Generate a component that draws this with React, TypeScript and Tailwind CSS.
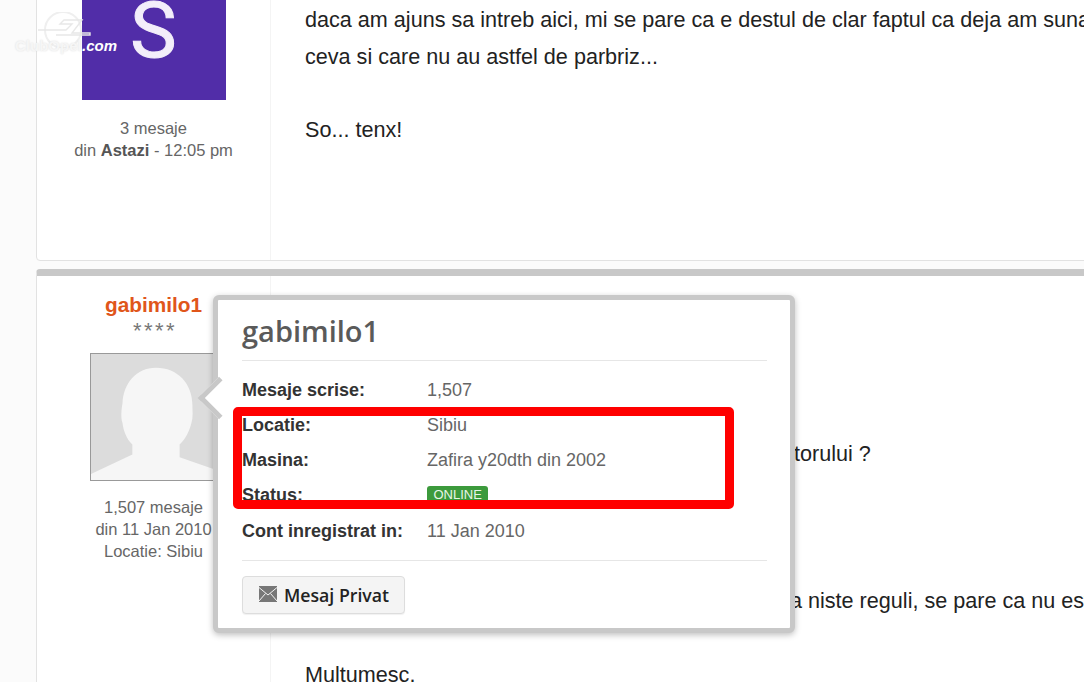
const rows = [
  { label: "Mesaje scrise:", value: "1,507" },
  { label: "Locatie:", value: "Sibiu" },
  { label: "Masina:", value: "Zafira y20dth din 2002" },
];

function Watermark() {
  return (
    <div className="absolute left-[14px] top-[12px] z-30 h-[46px] w-[106px] font-['Liberation_Sans',sans-serif] text-white">
      <svg width="106" height="36" viewBox="0 0 106 36" fill="none" className="absolute left-0 top-0">
        <circle cx="49" cy="18" r="18" stroke="#efefef" strokeWidth="2" />
        <path d="M24 18 H52 L58 12 H46 L50 8 H68 L58 21 H76 V23 H42" stroke="#e8e8e8" strokeWidth="1.4" />
      </svg>
      <span className="absolute left-px top-[25px] text-[15px] font-bold leading-[18px] text-[#f6f6f6] [text-shadow:0_0_2px_#ddd]">
        ClubOpel
      </span>
      <span className="absolute left-[68px] top-[25px] text-[15px] font-bold italic leading-[18px]">.com</span>
    </div>
  );
}

function Silhouette() {
  return (
    <svg viewBox="0 0 128 128" className="h-full w-full">
      <rect width="128" height="128" fill="#dcdcdc" />
      <path
        d="M66 14 C88 14 103 30 103 52 C103 58 104 64 102 70 C99 82 94 88 90 92 L90 105 L128 118 V128 H0 V122 L42 102 V92 C36 86 33 78 32 70 C30 64 31 56 32 50 C33 30 46 14 66 14 Z"
        fill="#f6f6f6"
      />
    </svg>
  );
}

function UserPopup() {
  return (
    <div className="absolute left-[176px] top-[19px] z-10 h-[338px] w-[582px] rounded-[6px] border-[5px] border-[#c8c8c8] bg-white pl-[24px] pr-[23px] shadow-[0_2px_6px_rgba(0,0,0,0.25)]">
      <div className="absolute left-[-14px] top-[83px] h-[30px] w-[30px] rotate-45 border-b-[5px] border-l-[5px] border-[#c8c8c8] bg-white" />
      <div className="relative">
        <h2 className="border-b border-[#e6e6e6] pb-[10px] pt-[12px] font-['Open_Sans',sans-serif] text-[29px] font-semibold leading-[38px] text-[#5a5a5a]">
          gabimilo1
        </h2>
        <div className="pt-[12px] text-[18px] leading-[35px]">
          {rows.map((row) => (
            <div key={row.label} className="flex">
              <span className="w-[185px] font-bold text-[#333]">{row.label}</span>
              <span className="text-[#666]">{row.value}</span>
            </div>
          ))}
          <div className="flex h-[34px]">
            <span className="w-[185px] font-bold text-[#333]">Status:</span>
            <span className="mt-[8px] h-[17px] rounded-[3px] bg-[#3c9a3c] px-[6.5px] text-[13px] leading-[17px] text-[#e8f5e8]">
              ONLINE
            </span>
          </div>
          <div className="flex pt-[2px]">
            <span className="w-[185px] font-bold text-[#333]">Cont inregistrat in:</span>
            <span className="text-[#666]">11 Jan 2010</span>
          </div>
        </div>
        <div className="mt-[11px] border-t border-[#e6e6e6] pt-[15px]">
          <button className="flex h-[38px] w-[163px] items-center gap-[7px] rounded-[4px] border border-[#ddd] bg-[#f4f4f4] pl-[16px] font-['Open_Sans',sans-serif] text-[17.7px] font-semibold text-[#222] shadow-[0_1px_1px_rgba(0,0,0,0.06)]">
            <svg width="18" height="16" viewBox="0 0 18 16" className="mb-[3px]">
              <rect width="18" height="16" fill="#777" />
              <path d="M0 1.5 L9 9 L18 1.5 M0 15 L6.5 7.5 M18 15 L11.5 7.5" fill="none" stroke="#f4f4f4" strokeWidth="1" />
            </svg>
            Mesaj Privat
          </button>
        </div>
      </div>
    </div>
  );
}

export default function App() {
  return (
    <div className="relative h-[682px] w-[1084px] overflow-hidden bg-[#fbfbfb] font-['Liberation_Sans',sans-serif]">
      <Watermark />
      <div className="pl-[36px]">
        {/* first post, scrolled most of the way out */}
        <div className="-mt-[61px] flex h-[322px] w-[1200px] rounded-[4px] border border-[#e2e2e2] bg-white">
          <aside className="flex w-[234px] shrink-0 flex-col items-center border-r border-[#f4f4f4] pt-[16px] text-[16.5px] leading-[22px] text-[#666]">
            <div className="flex h-[144px] w-[144px] justify-center bg-[#512da8] font-['Roboto',sans-serif] text-[78px] leading-none text-[#f3eefa] [-webkit-text-stroke:1px_#f3eefa]">
              <span className="mt-[36px]">S</span>
            </div>
            <div className="mt-[17px]">3 mesaje</div>
            <div>
              din <b className="text-[#555]">Astazi</b> - 12:05 pm
            </div>
          </aside>
          <div className="whitespace-nowrap pl-[34px] pt-[62px] text-[21.6px] leading-[36.5px] text-[#222]">
            <p>daca am ajuns sa intreb aici, mi se pare ca e destul de clar faptul ca deja am sunat la toate firmele de parbrize</p>
            <p>ceva si care nu au astfel de parbriz...</p>
            <p className="mt-[36.5px]">So... tenx!</p>
          </div>
        </div>

        {/* second post with the hover card open */}
        <div className="relative mt-[8px] flex h-[500px] w-[1200px] rounded-t-[4px] border-x border-t-[7px] border-x-[#e2e2e2] border-t-[#c8c8c8] bg-white">
          <aside className="flex w-[234px] shrink-0 flex-col items-center border-r border-[#f4f4f4] pt-[15px] text-[16.5px] leading-[22px] text-[#666]">
            <div className="text-[20.8px] font-bold leading-[28px] text-[#e0561a]">gabimilo1</div>
            <div className="ml-[3px] h-[21px] text-[22px] leading-[24px] tracking-[2.5px] text-[#777]">****</div>
            <div className="mt-[13px] h-[128px] w-[128px] border border-[#999]">
              <Silhouette />
            </div>
            <div className="mt-[15px]">1,507 mesaje</div>
            <div>din 11 Jan 2010</div>
            <div>Locatie: Sibiu</div>
          </aside>
          <div className="whitespace-nowrap pl-[34px] text-[21.6px] leading-[37px] text-[#222]">
            <p className="ml-[489px] mt-[159px]">torului ?</p>
            <p className="ml-[485px] mt-[110px]">a niste reguli, se pare ca nu este</p>
            <p className="mt-[37px]">Multumesc.</p>
          </div>
          <UserPopup />
        </div>
      </div>

      {/* red highlight drawn on the screenshot */}
      <div className="absolute left-[233px] top-[407px] z-20 h-[102px] w-[501px] rounded-[5px] border-[9px] border-[#f00]" />
    </div>
  );
}
